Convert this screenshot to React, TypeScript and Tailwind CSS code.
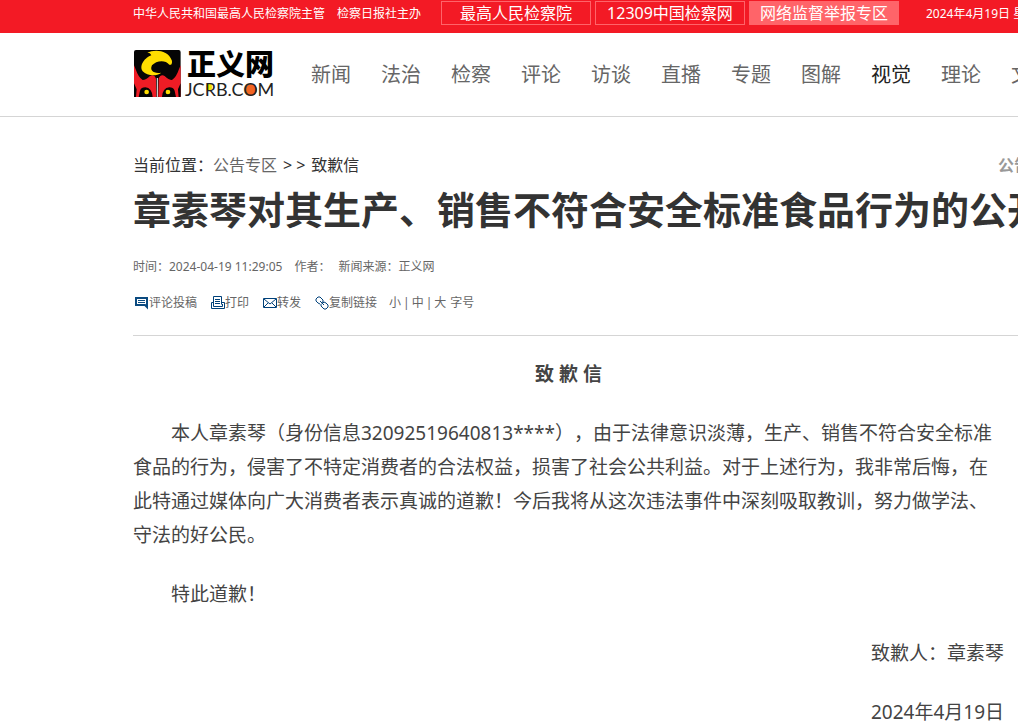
import React from "react";

const NAV = ["新闻", "法治", "检察", "评论", "访谈", "直播", "专题", "图解", "视觉", "理论", "文化"];

const PARTNERS = [
  { label: "最高人民检察院", filled: false },
  { label: "12309中国检察网", filled: false },
  { label: "网络监督举报专区", filled: true },
];

function Logo() {
  return (
    <svg viewBox="0 0 140 48" className="h-12 w-[140px] overflow-visible" role="img" aria-label="正义网 JCRB.COM">
      {/* Emblem, drawn on a finer grid */}
      <g transform="translate(0 -1) scale(0.333)">
        <rect x="0" y="0" width="140" height="141" rx="6" fill="#050505" />
        <path
          d="M0 46L5 58Q14 84 26 90Q36 90 48 78Q60 72 66 86L67 141L56 141Q54 114 34 112Q22 112 18 122L14 141L0 141z
             M140 46L135 58Q126 84 114 90Q104 90 92 78Q80 72 74 86L73 141L84 141Q86 114 106 112Q118 112 122 122L126 141L140 141z"
          fill="#ee1c25"
        />
        <path d="M0 100L8 118L6 141L0 141z M140 100L132 118L134 141L140 141z" fill="#050505" />
        <path d="M70 84V141" stroke="#fff" strokeWidth="3" />
        <path
          d="M40 8C60-2 102-2 114 32C115 42 112 46 106 44C94 28 66 32 54 46C46 62 60 72 82 68C66 80 40 78 26 64C14 46 34 22 52 16C50 10 46 8 40 8z"
          fill="#ffde00"
        />
        <circle cx="38" cy="126" r="7" fill="#ffde00" />
        <circle cx="102" cy="126" r="7" fill="#ffde00" />
      </g>
      <ellipse cx="75" cy="36" rx="3" ry="4" fill="#f5e600" />
      <circle cx="117" cy="39" r="6" fill="#f26522" />
      <text x="53" y="24" fontSize="29" className="fill-black font-['Noto_Sans_CJK_SC',sans-serif] font-black">
        正义网
      </text>
      <text x="51" y="45" fontSize="18" className="fill-[#222] font-[Lato,sans-serif]">
        JCRB.COM
      </text>
    </svg>
  );
}

function CommentIcon() {
  return (
    <svg viewBox="0 0 14 14" className="size-3.5" fill="none" stroke="#0b4a80" aria-hidden="true">
      <path d="M1 2h11v9l-2-2H1z" strokeWidth="2" />
      <path d="M3 4.5h7M3 6.5h7" />
    </svg>
  );
}

function PrintIcon() {
  return (
    <svg viewBox="0 0 14 14" className="size-3.5" fill="none" stroke="#00417a" aria-hidden="true">
      <path d="M2.5 8.500v-8h8v8M4 3.5h5M4 5.5h5M4 7.5h5M2 6.5H.5v6h13v-6H11M2.5 8v2.500h9V8" />
    </svg>
  );
}

function MailIcon() {
  return (
    <svg viewBox="0 0 14 14" className="size-3.5" fill="none" stroke="#00417a" aria-hidden="true">
      <path d="M.5 2.5h13v9H.5zM1 3l6 5 6-5M1 11l4-4M13 11L9 7" />
    </svg>
  );
}

function LinkIcon() {
  return (
    <svg viewBox="0 0 14 14" className="size-3.5" fill="none" stroke="#00417a" aria-hidden="true">
      <path d="M5 8L3 7L1 5V3l2-2h2l3 3v2L6 7M5 5l4 4M8 7l1-1 2 1 2 2v2l-2 2H9l-3-3V8" />
    </svg>
  );
}

function Toolbar() {
  return (
    <div className="flex h-5 items-center pl-0.5 text-xs text-[#666]">
      <a href="#comment" className="flex items-center">
        <CommentIcon />
        评论投稿
      </a>
      <button type="button" className="ml-3.5 flex items-center">
        <PrintIcon />
        打印
      </button>
      <button type="button" className="ml-3.5 flex items-center">
        <MailIcon />
        转发
      </button>
      <button type="button" className="ml-3.5 flex items-center">
        <LinkIcon />
        复制链接
      </button>
      <div className="ml-3 flex gap-0.5">
        <button type="button">小</button>|<button type="button">中</button>|
        <button type="button">大</button>
        <span className="ml-0.5">字号</span>
      </div>
    </div>
  );
}

export default function App() {
  return (
    <div
      lang="zh-CN"
      className="min-h-screen overflow-hidden bg-white font-['Noto_Sans','Noto_Sans_CJK_SC',sans-serif] text-[#333] [text-spacing-trim:space-all]"
    >
      <div className="bg-[#f31a25] pl-[133px] text-white">
        <div className="flex h-[33px] items-start whitespace-nowrap pt-px text-xs">
          <p className="w-[308px] shrink-0 leading-[26px]">
            中华人民共和国最高人民检察院主管<span className="ml-3">检察日报社主办</span>
          </p>
          <div className="flex shrink-0 gap-1">
            {PARTNERS.map((p) => (
              <a
                key={p.label}
                href="#partner"
                className={`h-6 w-[150px] border border-[#ff6469] text-center text-base leading-[22px] ${p.filled ? "bg-[#ff6469]" : ""}`}
              >
                {p.label}
              </a>
            ))}
          </div>
          <p className="ml-[27px] shrink-0 leading-[26px]">2024年4月19日 星期五</p>
        </div>
      </div>

      <header className="border-b border-[#d5d5d5] pl-[134px]">
        <div className="flex h-[83px] items-center">
          <a href="#home" className="shrink-0">
            <Logo />
          </a>
          <nav className="ml-[37px] flex shrink-0 gap-[30px] whitespace-nowrap text-xl text-[#666]">
            {NAV.map((item) => (
              <a key={item} href="#channel" className={item === "视觉" ? "text-[#222]" : ""}>
                {item}
              </a>
            ))}
          </nav>
        </div>
      </header>

      <main className="pl-[133px] pt-9">
        <div className="flex items-center whitespace-nowrap leading-6">
          <nav className="flex w-[865px] shrink-0 gap-1.5">
            <span className="-mr-1.5">当前位置：</span>
            <a href="#notices" className="text-[#666]">公告专区</a>
            <span className="flex gap-1">
              <span>&gt;</span>
              <span>&gt;</span>
            </span>
            <span>致歉信</span>
          </nav>
          <h2 className="font-bold text-[#999]">公告专区</h2>
        </div>

        <h1 className="whitespace-nowrap text-[38px] font-bold leading-[64px]">
          章素琴对其生产、销售不符合安全标准食品行为的公开道歉信
        </h1>

        <div className="flex pt-4 text-xs leading-5 text-[#666]">
          <span>时间：2024-04-19 11:29:05</span>
          <span className="ml-3">作者：</span>
          <span className="ml-2">新闻来源：正义网</span>
        </div>

        <div className="border-b border-[#d5d5d5] pb-[22px] pt-4">
          <Toolbar />
        </div>

        <article className="flex max-w-[871px] flex-col gap-[25px] pt-[21px] text-[19px] leading-[34px] text-[#444]">
          <h3 className="text-center font-bold">致 歉 信</h3>
          <p className="indent-[38px]">
            本人章素琴（身份信息32092519640813****），由于法律意识淡薄，生产、销售不符合安全标准食品的行为，侵害了不特定消费者的合法权益，损害了社会公共利益。对于上述行为，我非常后悔，在此特通过媒体向广大消费者表示真诚的道歉！今后我将从这次违法事件中深刻吸取教训，努力做学法、守法的好公民。
          </p>
          <p className="indent-[38px]">特此道歉！</p>
          <p className="text-right">致歉人：章素琴</p>
          <p className="text-right">2024年4月19日</p>
        </article>
      </main>
    </div>
  );
}
